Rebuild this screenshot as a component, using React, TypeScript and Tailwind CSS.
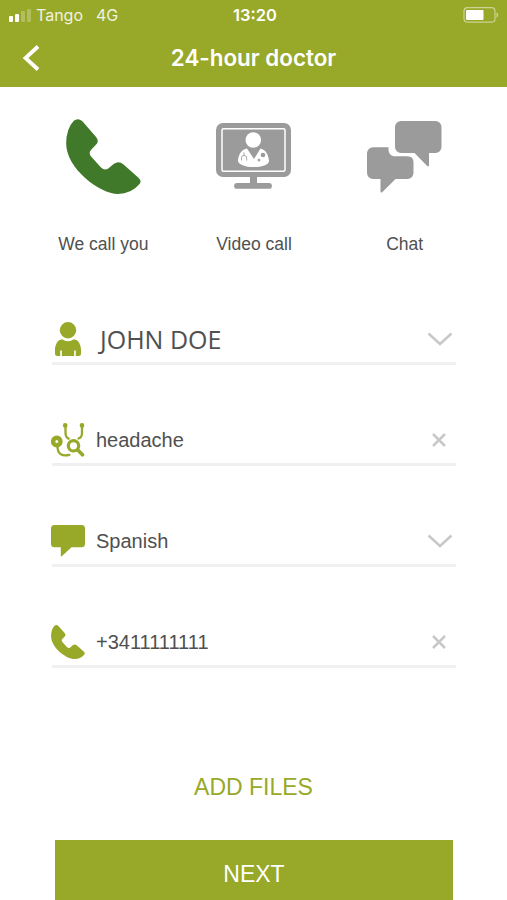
import type { ReactNode } from "react";

interface Mode {
  label: string;
  icon: ReactNode;
}

interface Field {
  value: string;
  icon: ReactNode;
  action: "open" | "clear";
  valueClass?: string;
}

function PhoneIcon({ className }: { className: string }) {
  return (
    <svg viewBox="49 41 225 226" fill="currentColor" className={className}>
      <path d="M72 46Q85 36 98 48L139 95Q149 107 140 117L125 133Q115 143 124 154L154 187Q165 198 176 190L193 176Q207 166 221 177L266 217Q278 228 270 237Q245 267 205 267C150 267 49 190 49 115Q49 70 72 46Z" />
    </svg>
  );
}

function MonitorIcon() {
  return (
    <svg viewBox="0 0 76 68" className="h-[68px] w-[76px]">
      <path fill="#9b9b9b" d="M7 0h61a7 7 0 0 1 7 7v40a7 7 0 0 1-7 7H41v6h12a2.8 2.8 0 0 1 0 5.800H21a2.800 2.800 0 0 1 0-5.800h13v-6H7a7 7 0 0 1-7-7V7a7 7 0 0 1 7-7z" />
      <rect x="6" y="5.800" width="63" height="42.500" rx="1.500" fill="none" stroke="#fff" strokeWidth="1.500" />
      <circle cx="37.300" cy="17" r="7.800" fill="#fff" />
      <path fill="#fff" d="M31 25.500l7 10.500 6.500-10.500c5 1.500 7.500 5 8.500 12 .5 4-7 6.500-15.500 6.500S21.500 41 22 37c1-7 4-10.500 9-11.500z" />
      <path d="M25.500 37.500v-2.500a2.600 2.600 0 0 1 5.200 0v2.500M28 32.300v-3" fill="none" stroke="#aaa" strokeWidth="1" />
      <circle cx="47" cy="32" r="2.300" fill="#9b9b9b" />
      <circle cx="43" cy="37" r="1.500" fill="#aaa" />
    </svg>
  );
}

function ChatIcon() {
  return (
    <svg viewBox="0 0 75 72" fill="#9b9b9b" className="h-[72px] w-[75px]">
      <path d="M34 0h34.500a6 6 0 0 1 6 6v20a6 6 0 0 1-6 6H62v12.500q-.500 1.500-1.800.500L47.500 32H34a6 6 0 0 1-6-6V6a6 6 0 0 1 6-6z" />
      <path d="M6 26.300h15.500v2.200c0 4 2.800 6.800 6.500 6.800h12.500q6 0 6 6V52a6 6 0 0 1-6 6H28.500L15.200 71.300q-1.700.800-1.700-.800V58H6a6 6 0 0 1-6-6V32.300a6 6 0 0 1 6-6z" />
    </svg>
  );
}

function PersonIcon() {
  return (
    <svg viewBox="0 0 26 34" fill="currentColor" className="h-[34px] w-[26px]">
      <circle cx="13" cy="8.200" r="8.200" />
      <path d="M7 17.200q6 4 12 0c4 .600 7 4.800 7 10.800v3.500q0 2.500-2.500 2.500h-2.700v-5.500h-1.600V34H6.800v-5.500H5.200V34H2.500Q0 34 0 31.500V28c0-6 3-10.200 7-10.800z" />
    </svg>
  );
}

function StethoscopeIcon() {
  return (
    <svg viewBox="0 0 34 34" fill="none" stroke="currentColor" strokeWidth="2.300" strokeLinecap="round" className="size-[34px]">
      <path d="M14.500 2v7.500q0 5 3.200 6.200M31 2v8q0 4.500-3.500 5.500" />
      <circle cx="14.200" cy="2.400" r="2.300" fill="currentColor" stroke="none" />
      <circle cx="31" cy="2.400" r="2.300" fill="currentColor" stroke="none" />
      <path d="M6.500 23.500c0 8 5 9.800 11.800 8.300" />
      <circle cx="5.800" cy="18.500" r="3.700" strokeWidth="4.400" />
      <circle cx="22.500" cy="22.800" r="5.200" strokeWidth="3.200" />
      <path d="M27 27.300l4.500 4.500" strokeWidth="3.600" />
    </svg>
  );
}

function BubbleIcon() {
  return (
    <svg viewBox="0 0 34 32" fill="currentColor" className="h-8 w-[34px]">
      <path d="M3.500 0h27a3.500 3.500 0 0 1 3.500 3.500v15.200a3.500 3.500 0 0 1-3.500 3.500h-10L11 31q-1.200 1-1.200-.500v-8.300H3.500A3.500 3.500 0 0 1 0 18.700V3.500A3.500 3.500 0 0 1 3.500 0z" />
    </svg>
  );
}

const modes: Mode[] = [
  { label: "We call you", icon: <PhoneIcon className="size-[75px] text-[#40792a]" /> },
  { label: "Video call", icon: <MonitorIcon /> },
  { label: "Chat", icon: <ChatIcon /> },
];

const fields: Field[] = [
  {
    value: "JOHN DOE",
    icon: <PersonIcon />,
    action: "open",
    valueClass: "pl-[4px] pt-[2px] font-['Open_Sans',sans-serif] text-[25px]",
  },
  { value: "headache", icon: <StethoscopeIcon />, action: "clear" },
  { value: "Spanish", icon: <BubbleIcon />, action: "open" },
  { value: "+3411111111", icon: <PhoneIcon className="size-[34px]" />, action: "clear" },
];

function StatusBar() {
  return (
    <div className="grid h-[30px] grid-cols-3 items-center pr-[8px] pl-[9px] text-[16px] text-white/85">
      <div className="flex items-center">
        <div className="flex items-end gap-[2px]">
          <span className="h-[6px] w-[4px] rounded-[1px] bg-white" />
          <span className="h-[8px] w-[4px] rounded-[1px] bg-white" />
          <span className="h-[11px] w-[4px] rounded-[1px] bg-white/25" />
          <span className="h-[13px] w-[4px] rounded-[1px] bg-white/25" />
        </div>
        <span className="ml-[5px]">Tango</span>
        <span className="ml-[13px]">4G</span>
      </div>
      <span className="pl-[2px] text-center text-[16.500px] font-semibold text-white">13:20</span>
      <svg viewBox="0 0 37 16" className="mr-[-1px] h-4 w-[37px] justify-self-end">
        <rect x="1" y="0.700" width="31" height="14.500" rx="3.500" fill="none" stroke="#fff" strokeOpacity="0.500" strokeWidth="1.200" />
        <rect x="3" y="3" width="17.500" height="10" rx="1" fill="#fff" />
        <path d="M33.500 5q3.500 3 0 6z" fill="#fff" fillOpacity="0.500" />
      </svg>
    </div>
  );
}

function FieldRow({ field }: { field: Field }) {
  return (
    <div className="flex h-[50px] items-center border-b-[3px] border-[#f0f0f1]">
      <div className="-ml-px flex w-[34px] shrink-0 justify-center text-[#98a828]">{field.icon}</div>
      <span className={`ml-[11px] flex-1 text-[#505050] ${field.valueClass ?? "text-[20px]"}`}>{field.value}</span>
      {field.action === "open" ? (
        <svg viewBox="0 0 26 14" className="mr-[3px] h-[14px] w-[26px]" fill="none" stroke="#c8c8c8" strokeWidth="2.500">
          <path d="M1.500 1.500L13 12L24.500 1.500" />
        </svg>
      ) : (
        <svg viewBox="0 0 14 14" className="mr-[10px] size-[14px]" fill="none" stroke="#c8c8c8" strokeWidth="2.500">
          <path d="M1 1L13 13M13 1L1 13" />
        </svg>
      )}
    </div>
  );
}

export default function App() {
  return (
    <div className="flex h-[900px] w-[507px] flex-col overflow-hidden bg-white font-['Liberation_Sans',sans-serif]">
      <header className="h-[87px] shrink-0 bg-[#98a828] font-[Inter,sans-serif]">
        <StatusBar />
        <div className="grid h-[55px] grid-cols-[60px_1fr_60px] items-center">
          <svg viewBox="0 0 18 26" className="ml-[22px] h-[26px] w-[18px]" fill="none" stroke="#fff" strokeWidth="3.800">
            <path d="M16 1.500L3.500 13L16 24.500" />
          </svg>
          <h1 className="text-center text-[22.400px] font-semibold text-white">24-hour doctor</h1>
        </div>
      </header>

      <section className="mr-[27px] ml-[28px] mt-[32px] grid h-[137px] shrink-0 grid-cols-3">
        {modes.map((mode) => (
          <div key={mode.label} className="flex flex-col items-center">
            <div className="flex h-[75px] items-center">{mode.icon}</div>
            <span className="mt-[37px] text-[17.500px] text-[#505050]">{mode.label}</span>
          </div>
        ))}
      </section>

      <section className="mr-[51px] ml-[52px] mt-[59px] flex shrink-0 flex-col gap-[51px]">
        {fields.map((field) => (
          <FieldRow key={field.value} field={field} />
        ))}
      </section>

      <button className="mx-auto mt-[101px] h-[36px] shrink-0 text-[23px] text-[#98a828]">ADD FILES</button>
      <button className="mr-[54px] ml-[55px] mt-[35px] h-[68px] shrink-0 bg-[#98a828] text-[23px] text-white">NEXT</button>
    </div>
  );
}
